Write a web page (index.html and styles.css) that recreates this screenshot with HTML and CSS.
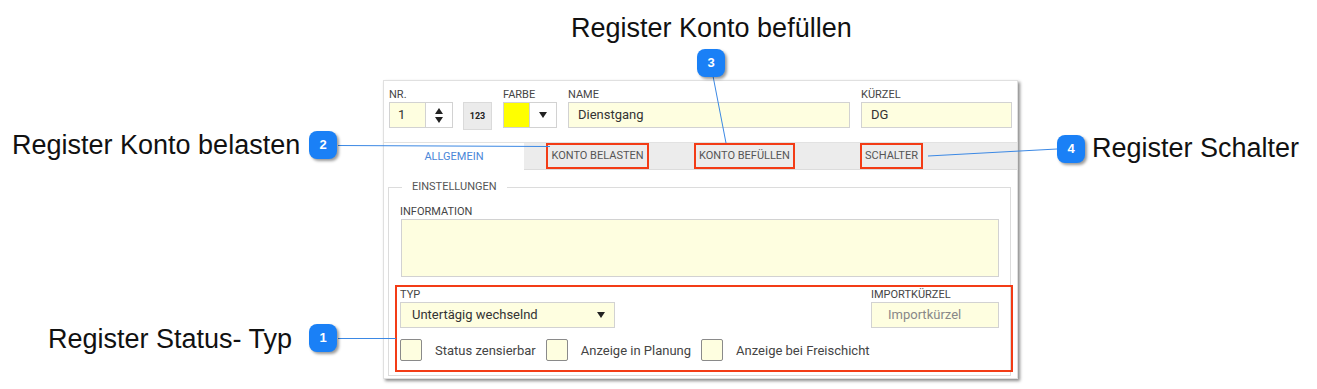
FILE: index.html
```html
<!DOCTYPE html>
<html lang="de">
<head>
    <meta charset="UTF-8">
    <title>Status-Typ | Register</title>
    <link rel="stylesheet" href="styles.css">
</head>
<body>
<div class="stage">

    <div class="panel">
        <div class="top-row">
            <div class="field">
                <label>NR.</label>
                <div class="combo">
                    <div class="input nr-input">1</div>
                    <div class="spinner">
                        <span class="tri-up"></span>
                        <span class="tri-down"></span>
                    </div>
                </div>
            </div>
            <div class="field field-123">
                <label>&nbsp;</label>
                <div class="btn-123">123</div>
            </div>
            <div class="field">
                <label>FARBE</label>
                <div class="combo">
                    <div class="swatch"></div>
                    <div class="drop-btn"><span class="tri-down"></span></div>
                </div>
            </div>
            <div class="field">
                <label>NAME</label>
                <div class="input name-input">Dienstgang</div>
            </div>
            <div class="field">
                <label>KÜRZEL</label>
                <div class="input short-input">DG</div>
            </div>
        </div>

        <div class="tabs">
            <div class="tab active">ALLGEMEIN</div>
            <div class="tab"><span class="mark">KONTO BELASTEN</span></div>
            <div class="tab"><span class="mark">KONTO BEFÜLLEN</span></div>
            <div class="tab"><span class="mark">SCHALTER</span></div>
        </div>

        <fieldset class="settings">
            <legend>EINSTELLUNGEN</legend>
            <label class="info-label">INFORMATION</label>
            <div class="textarea"></div>

            <div class="type-group">
                <div class="type-row">
                    <div class="field">
                        <label>TYP</label>
                        <div class="input select">Untertägig wechselnd <span class="tri-down"></span></div>
                    </div>
                    <div class="field">
                        <label>IMPORTKÜRZEL</label>
                        <div class="input import-input">Importkürzel</div>
                    </div>
                </div>
                <div class="check-row">
                    <div class="check"><span class="box"></span>Status zensierbar</div>
                    <div class="check"><span class="box"></span>Anzeige in Planung</div>
                    <div class="check"><span class="box"></span>Anzeige bei Freischicht</div>
                </div>
            </div>
        </fieldset>
    </div>

    <!-- callouts -->
    <svg class="lines" width="1317" height="389">
        <line x1="338" y1="145.5" x2="550" y2="146.5"/>
        <line x1="713" y1="76" x2="726" y2="143"/>
        <line x1="928" y1="156" x2="1057" y2="149"/>
        <line x1="338" y1="338.5" x2="396" y2="338.5"/>
    </svg>

    <div class="caption cap-befuellen">Register Konto befüllen</div>
    <div class="caption cap-belasten">Register Konto belasten</div>
    <div class="caption cap-schalter">Register Schalter</div>
    <div class="caption cap-typ">Register Status- Typ</div>

    <div class="bubble b1">1</div>
    <div class="bubble b2">2</div>
    <div class="bubble b3">3</div>
    <div class="bubble b4">4</div>

</div>
</body>
</html>
```

FILE: styles.css
```css
body {
    margin: 0;
    padding: 0;
    background-color: white;
    font-family: Roboto, "Liberation Sans", sans-serif;
}

.stage {
    position: relative;
    width: 1317px;
    height: 389px;
    overflow: hidden;
}

/* screenshot panel */
.panel {
    box-sizing: border-box;
    margin: 80px 0 0 383px;
    width: 635px;
    height: 299px;
    border: 1px solid #e0e0e0;
    box-shadow: 2px 2px 3px rgba(0, 0, 0, 0.45);
    background-color: white;
}

.top-row {
    display: flex;
    gap: 11px;
    padding: 8px 0 0 5px;
}

.field label {
    display: block;
    font-size: 11px;
    line-height: 12px;
    margin-bottom: 1px;
    color: #454545;
}

.field-123 {
    margin-left: -1px;
}

.combo {
    display: flex;
}

.input {
    box-sizing: border-box;
    height: 26px;
    border: 1px solid #d2d2d2;
    background-color: #fefee0;
    font-size: 13px;
    line-height: 24px;
    color: #333;
    padding-left: 9px;
}

.nr-input {
    width: 37px;
    padding-left: 8px;
}

.spinner {
    box-sizing: border-box;
    width: 27px;
    height: 26px;
    border: 1px solid #d2d2d2;
    border-left: none;
    background: white;
    display: flex;
    flex-direction: column;
    align-items: center;
    justify-content: center;
    gap: 3px;
}

.tri-up,
.tri-down {
    display: inline-block;
    width: 0;
    height: 0;
    border-left: 4px solid transparent;
    border-right: 4px solid transparent;
}

.tri-up {
    border-bottom: 6px solid #222;
}

.tri-down {
    border-top: 6px solid #222;
}

.btn-123 {
    box-sizing: border-box;
    width: 29px;
    height: 28px;
    border: 1px solid #dadada;
    background-color: #ebebeb;
    font-size: 9px;
    font-weight: bold;
    line-height: 26px;
    text-align: center;
    color: #222;
}

.swatch {
    box-sizing: border-box;
    width: 27px;
    height: 26px;
    border: 1px solid #d2d2d2;
    background-color: #ffff00;
}

.drop-btn {
    box-sizing: border-box;
    width: 27px;
    height: 26px;
    border: 1px solid #d2d2d2;
    border-left: none;
    background: white;
    display: flex;
    align-items: center;
    justify-content: center;
}

.name-input {
    width: 282px;
}

.short-input {
    width: 151px;
}

/* tabs */
.tabs {
    display: flex;
    margin-top: 12px;
    height: 28px;
    box-sizing: border-box;
    background-color: #ececec;
    border-top: 1px solid #e2e2e2;
    border-bottom: 1px solid #dcdcdc;
}

.tab {
    width: 147px;
    display: flex;
    align-items: center;
    justify-content: center;
    font-size: 11px;
    color: #555;
}

.tab.active {
    width: 140px;
    background-color: white;
    color: #4a86d8;
    height: 27px;
}

.mark {
    box-sizing: border-box;
    height: 26px;
    line-height: 22px;
    padding: 0 3px;
    border: 2px solid #f33c16;
}

/* settings */
.settings {
    margin: 11px 6px 0 4px;
    padding: 0 11px 3px 11px;
    border: 1px solid #dcdcdc;
}

.settings legend {
    margin-left: 2px;
    padding: 0 10px;
    font-size: 11px;
    line-height: 12px;
    color: #555;
}

.info-label {
    display: block;
    margin-top: 13px;
    font-size: 11px;
    line-height: 12px;
    color: #454545;
}

.textarea {
    box-sizing: border-box;
    margin: 1px 0 0 1px;
    height: 58px;
    border: 1px solid #d2d2d2;
    background-color: #fefee0;
}

.type-group {
    margin: 8px -14px 0 -5px;
    padding: 2px 12px 9px 3px;
    border: 2px solid #f33c16;
}

.type-row {
    display: flex;
    justify-content: space-between;
}

.select {
    width: 215px;
    padding-left: 11px;
    display: flex;
    align-items: center;
    justify-content: space-between;
    padding-right: 9px;
}

.import-input {
    width: 128px;
    padding-left: 16px;
    color: #888;
}

.check-row {
    display: flex;
    margin-top: 11px;
}

.check {
    display: flex;
    align-items: center;
    gap: 13px;
    margin-right: 10px;
    font-size: 13px;
    color: #444;
}

.check .box {
    box-sizing: border-box;
    width: 22px;
    height: 22px;
    border: 1px solid #8a8a8a;
    border-radius: 2px;
    background-color: #fefee0;
}

/* callouts */
.lines {
    position: absolute;
    left: 0;
    top: 0;
}

.lines line {
    stroke: #3b88e4;
    stroke-width: 1;
}

.caption {
    position: absolute;
    font-family: "Liberation Sans", Arial, sans-serif;
    font-size: 27px;
    line-height: 27px;
    color: #111;
    white-space: nowrap;
}

.cap-befuellen {
    left: 571px;
    top: 15px;
}

.cap-belasten {
    left: 12px;
    top: 132px;
}

.cap-schalter {
    left: 1092px;
    top: 135px;
}

.cap-typ {
    left: 48px;
    top: 326px;
}

.bubble {
    position: absolute;
    width: 28px;
    height: 28px;
    border-radius: 8px;
    background-color: #1a80f6;
    box-shadow: 2px 2px 3px rgba(0, 0, 0, 0.4);
    color: white;
    font-family: "Liberation Sans", Arial, sans-serif;
    font-size: 13px;
    font-weight: bold;
    line-height: 28px;
    text-align: center;
}

.b1 { left: 309px; top: 324px; }
.b2 { left: 309px; top: 131px; }
.b3 { left: 697px; top: 49px; }
.b4 { left: 1057px; top: 135px; }
```
